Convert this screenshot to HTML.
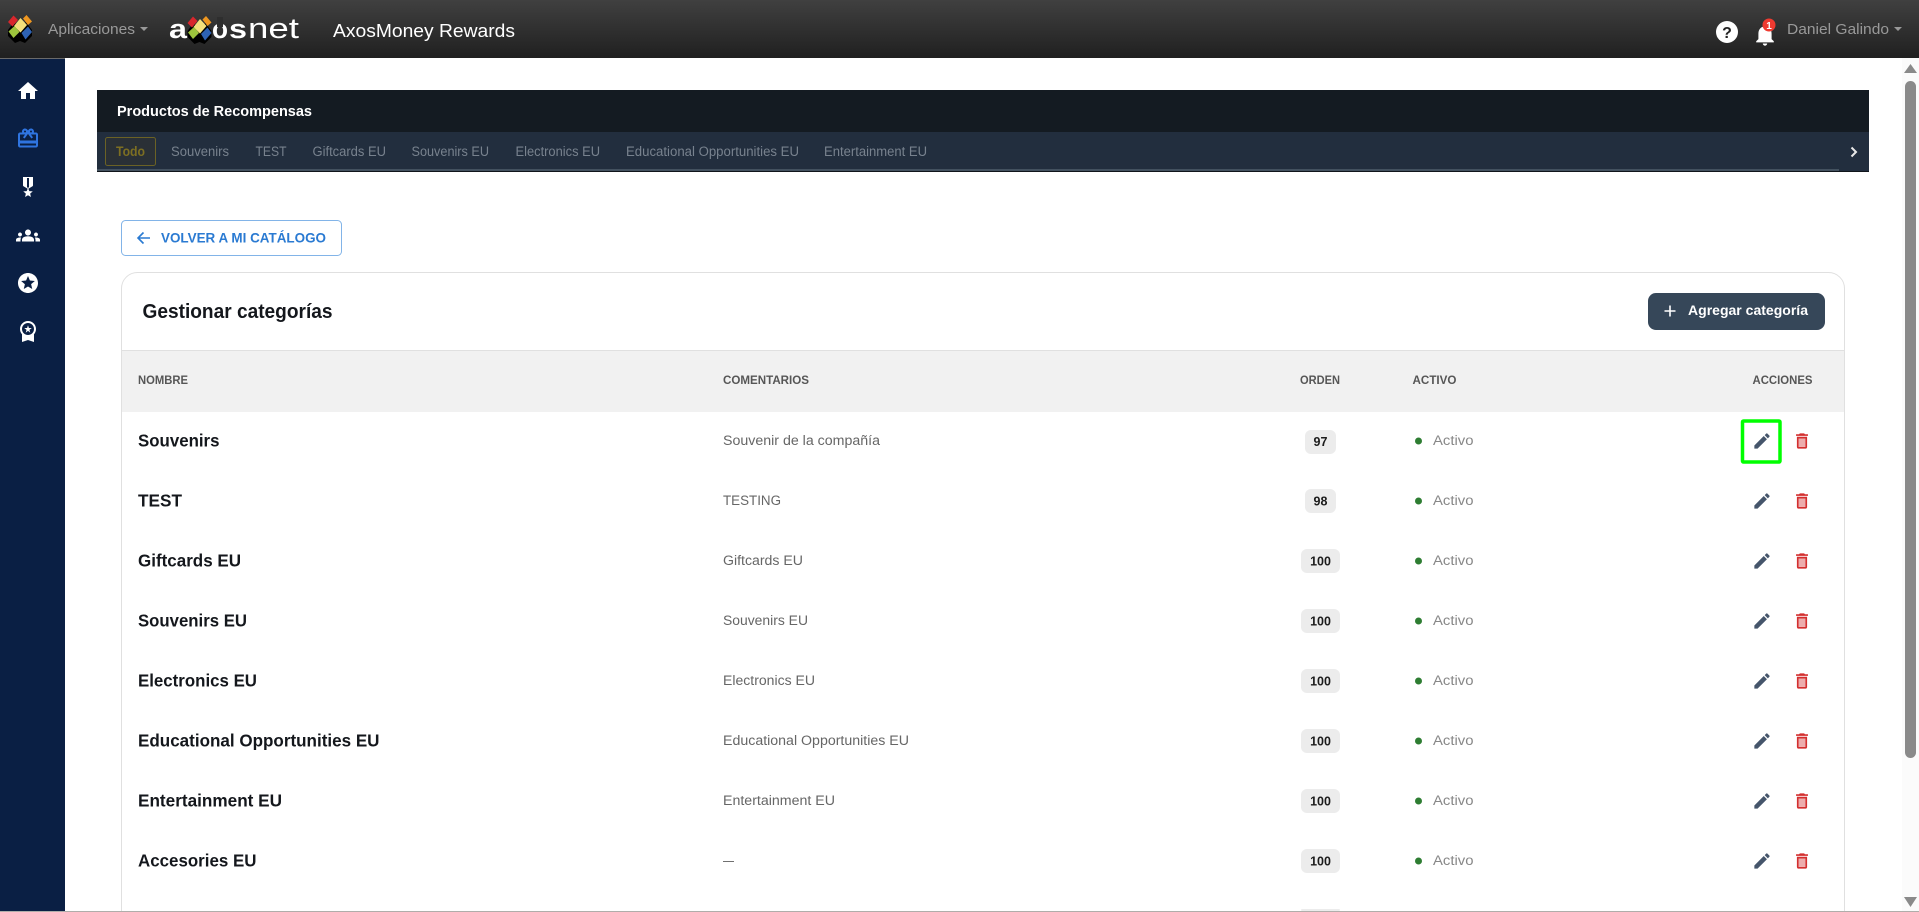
<!DOCTYPE html>
<html lang="es"><head><meta charset="utf-8"><title>Gestionar categorías</title>
<style>
html,body{margin:0;padding:0;width:1919px;height:912px;overflow:hidden;background:#fff}
svg{display:block}
text{font-family:"Liberation Sans",Arial,sans-serif}
.n{font-size:17.5px;font-weight:700;fill:#14171c}
.c{font-size:13.5px;fill:#666}
.h{font-size:12px;font-weight:700;fill:#565656}
.t{font-size:13.5px;fill:#78828e}
.b{font-size:12.5px;font-weight:700;fill:#1c1c1c;text-anchor:middle}
.a{font-size:13.5px;fill:#878787}
</style></head><body>
<svg width="1919" height="912" viewBox="0 0 1919 912" xmlns="http://www.w3.org/2000/svg">
<defs>
<linearGradient id="hd" x1="0" y1="0" x2="0" y2="1"><stop offset="0" stop-color="#404040"/><stop offset="1" stop-color="#202020"/></linearGradient>
<g id="mark">
<polygon points="-12,-1 -6,-9 1,-2 0,10 -5,12 -12,5" fill="#000" transform="translate(0,3)"/>
<polygon points="12,-1 6,-9 -1,-2 0,10 5,12 12,5" fill="#000" transform="translate(0,3)"/>
<polygon points="-12,-6 -6.5,-12.5 -2,-8 -7.5,-1.5" fill="#d8262c"/>
<polygon points="-6,-2 0.5,-10 7,-3 0.5,4.5" fill="#f4e07c"/>
<polygon points="3,-9.5 6.5,-13 12,-6.5 8,-3" fill="#ef9720"/>
<polygon points="-11.5,3.5 -5.5,-2 -0.5,4 -6.5,10" fill="#9cc33c"/>
<polygon points="1.5,5 8,-1.5 12,4 5.5,11.5" fill="#2e62b2"/>
</g>
<path id="pen" fill="#45556b" d="M3 17.25V21h3.75L17.81 9.94l-3.75-3.75L3 17.25zM20.71 7.04c.39-.39.39-1.02 0-1.41l-2.34-2.34a.9959.9959 0 0 0-1.41 0l-1.83 1.83 3.75 3.75 1.83-1.83z"/>
<g id="del"><path fill="#d32f2f" opacity=".4" d="M8 9h8v10H8z"/><path fill="#d32f2f" fill-rule="evenodd" d="M15.5 4l-1-1h-5l-1 1H5v2h14V4zM6 19c0 1.1.9 2 2 2h8c1.1 0 2-.9 2-2V7H6v12zM8 9h8v10H8V9z"/></g>
<g id="act"><use href="#pen" transform="translate(-10.2,-10.2) scale(.85)"/><use href="#del" transform="translate(29.8,-10.2) scale(.85)"/></g>
</defs>

<!-- main card -->
<path d="M121.5 912V288.5a16 16 0 0 1 16-16H1828.5a16 16 0 0 1 16 16V912" fill="#fff" stroke="#e0e0e0"/>
<rect x="122" y="350" width="1722" height="1" fill="#e0e0e0"/>
<rect x="122" y="351" width="1722" height="61" fill="#f1f1f1"/>

<!-- header -->
<rect x="0" y="0" width="1919" height="58" fill="url(#hd)"/>
<use href="#mark" transform="translate(20,28)"/>
<text x="48" y="34" font-size="15" fill="#999" textLength="87" lengthAdjust="spacingAndGlyphs">Aplicaciones</text>
<polygon points="140,27 148,27 144,31" fill="#999"/>
<!-- axosnet logo -->
<text x="169" y="38" font-size="27" font-weight="700" fill="#fff" textLength="18" lengthAdjust="spacingAndGlyphs">a</text>
<use href="#mark" transform="translate(199.5,29)"/>
<text x="212" y="38" font-size="27" font-weight="700" fill="#fff" textLength="16" lengthAdjust="spacingAndGlyphs">o</text>
<rect x="217" y="17" width="6" height="10" fill="#2e2e2e"/>
<text x="229" y="38" font-size="27" font-weight="700" fill="#fff" textLength="18" lengthAdjust="spacingAndGlyphs">s</text>
<text x="248" y="38" font-size="29" fill="#fff" textLength="51" lengthAdjust="spacingAndGlyphs">net</text>
<text x="333" y="37" font-size="18.5" fill="#fff" textLength="182" lengthAdjust="spacingAndGlyphs">AxosMoney Rewards</text>

<circle cx="1727" cy="32" r="11" fill="#fff"/>
<text x="1727" y="38" font-size="16" font-weight="700" fill="#222" text-anchor="middle">?</text>
<path fill="#fff" transform="translate(1751.8,21.5) scale(1.1)" d="M12 22c1.1 0 2-.9 2-2h-4c0 1.1.9 2 2 2zm6-6v-5c0-3.07-1.63-5.64-4.5-6.32V4c0-.83-.67-1.5-1.5-1.5s-1.5.67-1.5 1.5v.68C7.64 5.36 6 7.92 6 11v5l-2 2v1h16v-1l-2-2z"/>
<circle cx="1769" cy="25" r="6.5" fill="#f03a30"/>
<text x="1769" y="29" font-size="10" font-weight="700" fill="#fff" text-anchor="middle">1</text>
<text x="1787" y="34" font-size="15" fill="#999" textLength="102" lengthAdjust="spacingAndGlyphs">Daniel Galindo</text>
<polygon points="1894,27 1902,27 1898,31" fill="#999"/>

<!-- sidebar -->
<rect x="0" y="58" width="65" height="853" fill="#0a1f44"/>
<rect x="0" y="58" width="65" height="1" fill="#6a6a6a"/>
<path fill="#fff" transform="translate(16,79)" d="M10 20v-6h4v6h5v-8h3L12 3 2 12h3v8z"/>
<path fill="#2f74e0" transform="translate(16,126.5)" d="M20 6h-2.18c.11-.31.18-.65.18-1 0-1.66-1.34-3-3-3-1.05 0-1.96.54-2.5 1.35l-.5.67-.5-.68C10.96 2.54 10.05 2 9 2 7.34 2 6 3.34 6 5c0 .35.07.69.18 1H4c-1.11 0-1.99.89-1.99 2L2 19c0 1.11.89 2 2 2h16c1.11 0 2-.89 2-2V8c0-1.11-.89-2-2-2zm-5-2c.55 0 1 .45 1 1s-.45 1-1 1-1-.45-1-1 .45-1 1-1zM9 4c.55 0 1 .45 1 1s-.45 1-1 1-1-.45-1-1 .45-1 1-1zm11 15H4v-2h16v2zm0-5H4V8h5.08L7 10.83 8.62 12 11 8.76l1-1.36 1 1.36L15.38 12 17 10.83 14.92 8H20v6z"/>
<path fill="#fff" transform="translate(16,175)" d="M17 10.43V2H7v8.43c0 .35.18.68.49.86l4.18 2.51-.99 2.34-3.41.29 2.59 2.24L9.07 22 12 20.23 14.93 22l-.78-3.33 2.59-2.24-3.41-.29-.99-2.34 4.18-2.51c.3-.18.48-.5.48-.86zm-4 1.8-1 .6-1-.6V3h2v9.23z"/>
<path fill="#fff" transform="translate(16,223.5)" d="M12 12.75c1.63 0 3.07.39 4.24.9 1.08.48 1.76 1.56 1.76 2.73V18H6v-1.61c0-1.18.68-2.26 1.76-2.73 1.17-.52 2.61-.91 4.24-.91zM4 13c1.1 0 2-.9 2-2s-.9-2-2-2-2 .9-2 2 .9 2 2 2zm1.13 1.1c-.37-.06-.74-.1-1.13-.1-.99 0-1.93.21-2.78.58C.48 14.9 0 15.62 0 16.43V18h4.5v-1.61c0-.83.23-1.61.63-2.29zM20 13c1.1 0 2-.9 2-2s-.9-2-2-2-2 .9-2 2 .9 2 2 2zm4 3.43c0-.81-.48-1.53-1.22-1.85-.85-.37-1.79-.58-2.78-.58-.39 0-.76.04-1.13.1.4.68.63 1.46.63 2.29V18H24v-1.57zM12 6c1.66 0 3 1.34 3 3s-1.34 3-3 3-3-1.34-3-3 1.34-3 3-3z"/>
<path fill="#fff" transform="translate(16,271)" d="M11.99 2C6.47 2 2 6.48 2 12s4.47 10 9.99 10C17.52 22 22 17.52 22 12S17.52 2 11.99 2zm4.24 16L12 15.45 7.77 18l1.12-4.81-3.73-3.23 4.92-.42L12 5l1.92 4.53 4.92.42-3.73 3.23L16.23 18z"/>
<path fill="#fff" transform="translate(16,319)" d="M9.68 13.69 12 11.93l2.31 1.76-.88-2.85L15.75 9h-2.84L12 6.19 11.09 9H8.25l2.31 1.84-.88 2.85zM20 10c0-4.42-3.58-8-8-8s-8 3.58-8 8c0 2.03.76 3.87 2 5.28V23l6-2 6 2v-7.72c1.24-1.41 2-3.25 2-5.28zm-8-6c3.31 0 6 2.69 6 6s-2.69 6-6 6-6-2.69-6-6 2.69-6 6-6z"/>

<!-- product band -->
<rect x="97" y="90" width="1772" height="42" fill="#141b22"/>
<rect x="97" y="132" width="1772" height="40" fill="#222e3e"/>
<rect x="97" y="169" width="1742" height="2" fill="#43515f"/>
<rect x="97" y="171" width="1772" height="1" fill="#10151b"/>
<text x="117" y="116" font-size="14.5" font-weight="700" fill="#fff" textLength="195" lengthAdjust="spacingAndGlyphs">Productos de Recompensas</text>
<rect x="105.5" y="137.5" width="50" height="28" rx="2" fill="#2a3036" stroke="#6b6225"/>
<text x="116" y="156" font-size="13.5" font-weight="700" fill="#7d6f22" textLength="29" lengthAdjust="spacingAndGlyphs">Todo</text>
<text class="t" x="171" y="156" textLength="58" lengthAdjust="spacingAndGlyphs">Souvenirs</text>
<text class="t" x="255.5" y="156" textLength="31" lengthAdjust="spacingAndGlyphs">TEST</text>
<text class="t" x="312.5" y="156" textLength="73.5" lengthAdjust="spacingAndGlyphs">Giftcards EU</text>
<text class="t" x="411.5" y="156" textLength="77.5" lengthAdjust="spacingAndGlyphs">Souvenirs EU</text>
<text class="t" x="515.5" y="156" textLength="84.5" lengthAdjust="spacingAndGlyphs">Electronics EU</text>
<text class="t" x="626" y="156" textLength="173" lengthAdjust="spacingAndGlyphs">Educational Opportunities EU</text>
<text class="t" x="824" y="156" textLength="103" lengthAdjust="spacingAndGlyphs">Entertainment EU</text>
<path d="M1851.5 147.5l4.5 4.5-4.5 4.5" fill="none" stroke="#e8e8e8" stroke-width="2"/>

<!-- back button -->
<rect x="121.5" y="220.5" width="220" height="35" rx="4" fill="#fff" stroke="#82b4e8"/>
<path d="M150 238h-12M143.5 232.5L138 238l5.5 5.5" fill="none" stroke="#2a7ad2" stroke-width="1.6"/>
<text x="161" y="242.5" font-size="13.5" font-weight="700" fill="#2a7ad2" textLength="165" lengthAdjust="spacingAndGlyphs">VOLVER A MI CATÁLOGO</text>

<text x="142.5" y="318" font-size="20" font-weight="700" fill="#14171c" textLength="190" lengthAdjust="spacingAndGlyphs">Gestionar categorías</text>
<rect x="1648" y="293" width="177" height="37" rx="8" fill="#364759"/>
<path d="M1664.5 311h11M1670 305.5v11" stroke="#fff" stroke-width="1.6" fill="none"/>
<text x="1688" y="315" font-size="14" font-weight="700" fill="#fff" textLength="120" lengthAdjust="spacingAndGlyphs">Agregar categoría</text>

<text class="h" x="138" y="384" textLength="50" lengthAdjust="spacingAndGlyphs">NOMBRE</text>
<text class="h" x="723" y="384" textLength="86" lengthAdjust="spacingAndGlyphs">COMENTARIOS</text>
<text class="h" x="1300" y="384" textLength="40" lengthAdjust="spacingAndGlyphs">ORDEN</text>
<text class="h" x="1412.5" y="384" textLength="44" lengthAdjust="spacingAndGlyphs">ACTIVO</text>
<text class="h" x="1752.5" y="384" textLength="60" lengthAdjust="spacingAndGlyphs">ACCIONES</text>

<!-- rows -->
<text class="n" x="138" y="446.5" textLength="81.5" lengthAdjust="spacingAndGlyphs">Souvenirs</text>
<text class="c" x="723" y="445" textLength="157" lengthAdjust="spacingAndGlyphs">Souvenir de la compañía</text>
<rect x="1305" y="430" width="31" height="24" rx="6" fill="#ececec"/><text class="b" x="1320.5" y="446">97</text>
<circle cx="1418.5" cy="441" r="3.5" fill="#2e7d32"/><text class="a" x="1433" y="445" textLength="40.5" lengthAdjust="spacingAndGlyphs">Activo</text>
<use href="#act" x="1762" y="441"/>

<text class="n" x="138" y="506.5" textLength="44" lengthAdjust="spacingAndGlyphs">TEST</text>
<text class="c" x="723" y="505" textLength="58" lengthAdjust="spacingAndGlyphs">TESTING</text>
<rect x="1305" y="489" width="31" height="24" rx="6" fill="#ececec"/><text class="b" x="1320.5" y="505.5">98</text>
<circle cx="1418.5" cy="501" r="3.5" fill="#2e7d32"/><text class="a" x="1433" y="505" textLength="40.5" lengthAdjust="spacingAndGlyphs">Activo</text>
<use href="#act" x="1762" y="501"/>

<text class="n" x="138" y="566.5" textLength="103" lengthAdjust="spacingAndGlyphs">Giftcards EU</text>
<text class="c" x="723" y="565" textLength="80" lengthAdjust="spacingAndGlyphs">Giftcards EU</text>
<rect x="1301" y="549" width="39" height="24" rx="6" fill="#ececec"/><text class="b" x="1320.5" y="565.5">100</text>
<circle cx="1418.5" cy="561" r="3.5" fill="#2e7d32"/><text class="a" x="1433" y="565" textLength="40.5" lengthAdjust="spacingAndGlyphs">Activo</text>
<use href="#act" x="1762" y="561"/>

<text class="n" x="138" y="626.5" textLength="109" lengthAdjust="spacingAndGlyphs">Souvenirs EU</text>
<text class="c" x="723" y="625" textLength="85" lengthAdjust="spacingAndGlyphs">Souvenirs EU</text>
<rect x="1301" y="609" width="39" height="24" rx="6" fill="#ececec"/><text class="b" x="1320.5" y="625.5">100</text>
<circle cx="1418.5" cy="621" r="3.5" fill="#2e7d32"/><text class="a" x="1433" y="625" textLength="40.5" lengthAdjust="spacingAndGlyphs">Activo</text>
<use href="#act" x="1762" y="621"/>

<text class="n" x="138" y="686.5" textLength="119" lengthAdjust="spacingAndGlyphs">Electronics EU</text>
<text class="c" x="723" y="685" textLength="92" lengthAdjust="spacingAndGlyphs">Electronics EU</text>
<rect x="1301" y="669" width="39" height="24" rx="6" fill="#ececec"/><text class="b" x="1320.5" y="685.5">100</text>
<circle cx="1418.5" cy="681" r="3.5" fill="#2e7d32"/><text class="a" x="1433" y="685" textLength="40.5" lengthAdjust="spacingAndGlyphs">Activo</text>
<use href="#act" x="1762" y="681"/>

<text class="n" x="138" y="746.5" textLength="241.5" lengthAdjust="spacingAndGlyphs">Educational Opportunities EU</text>
<text class="c" x="723" y="745" textLength="186" lengthAdjust="spacingAndGlyphs">Educational Opportunities EU</text>
<rect x="1301" y="729" width="39" height="24" rx="6" fill="#ececec"/><text class="b" x="1320.5" y="745.5">100</text>
<circle cx="1418.5" cy="741" r="3.5" fill="#2e7d32"/><text class="a" x="1433" y="745" textLength="40.5" lengthAdjust="spacingAndGlyphs">Activo</text>
<use href="#act" x="1762" y="741"/>

<text class="n" x="138" y="806.5" textLength="144" lengthAdjust="spacingAndGlyphs">Entertainment EU</text>
<text class="c" x="723" y="805" textLength="112" lengthAdjust="spacingAndGlyphs">Entertainment EU</text>
<rect x="1301" y="789" width="39" height="24" rx="6" fill="#ececec"/><text class="b" x="1320.5" y="805.5">100</text>
<circle cx="1418.5" cy="801" r="3.5" fill="#2e7d32"/><text class="a" x="1433" y="805" textLength="40.5" lengthAdjust="spacingAndGlyphs">Activo</text>
<use href="#act" x="1762" y="801"/>

<text class="n" x="138" y="866.5" textLength="118.5" lengthAdjust="spacingAndGlyphs">Accesories EU</text>
<text class="c" x="723" y="865" textLength="11" lengthAdjust="spacingAndGlyphs">—</text>
<rect x="1301" y="849" width="39" height="24" rx="6" fill="#ececec"/><text class="b" x="1320.5" y="865.5">100</text>
<circle cx="1418.5" cy="861" r="3.5" fill="#2e7d32"/><text class="a" x="1433" y="865" textLength="40.5" lengthAdjust="spacingAndGlyphs">Activo</text>
<use href="#act" x="1762" y="861"/>

<rect x="1301" y="909" width="39" height="2" rx="1" fill="#ececec"/>

<!-- highlight -->
<rect x="1742.5" y="421" width="37.5" height="41" rx="1" fill="none" stroke="#00ff00" stroke-width="3.5"/>

<!-- scrollbar -->
<rect x="1902" y="58" width="17" height="853" fill="#fbfbfb"/>
<polygon points="1904,73 1917,73 1910.5,64" fill="#8a8a8a"/>
<rect x="1905" y="81" width="11" height="677" rx="5.5" fill="#8a8a8a"/>
<polygon points="1904,897 1917,897 1910.5,907" fill="#8a8a8a"/>

<rect x="0" y="911" width="1919" height="1" fill="#b0adaa"/>
</svg>
</body></html>
